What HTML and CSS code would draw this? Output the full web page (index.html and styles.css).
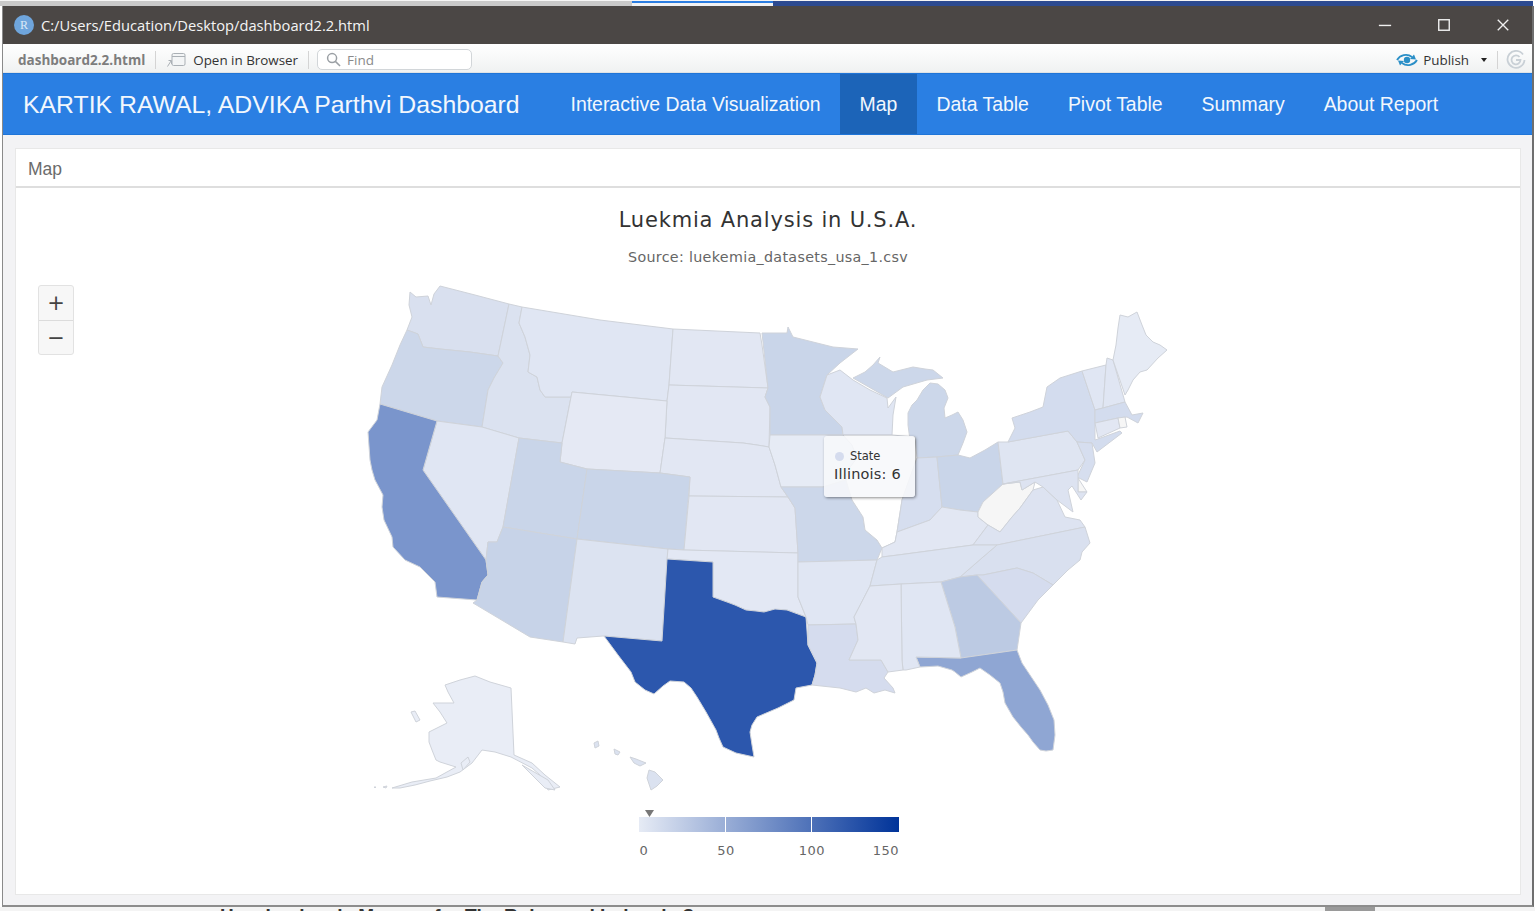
FILE: index.html
```html
<!DOCTYPE html>
<html lang="en">
<head>
<meta charset="utf-8">
<title>dashboard2.2.html</title>
<link rel="stylesheet" href="styles.css">
</head>
<body>
<div class="screen">
  <div class="tabstrip"><span class="seg-grey"></span><span class="seg-active"></span><span class="seg-dark"></span></div>
  <div class="window">
    <header class="titlebar">
      <span class="r-logo">R</span>
      <span class="path">C:/Users/Education/Desktop/dashboard2.2.html</span>
      <span class="winctl">
        <svg class="wc" viewBox="0 0 16 16"><path d="M1 8.500H15"/></svg>
        <svg class="wc" viewBox="0 0 16 16"><rect x="2" y="2" width="12" height="12"/></svg>
        <svg class="wc" viewBox="0 0 16 16"><path d="M2 2L14 14M14 2L2 14"/></svg>
      </span>
    </header>
    <div class="toolbar">
      <span class="fname">dashboard2.2.html</span>
      <span class="tsep"></span>
      <svg class="open-ic" viewBox="0 0 20 16"><rect x="6" y="1.500" width="13" height="12" rx="1.500"/><path d="M6 4.500H19"/><path class="arrow" d="M1.500 14.500L5 9M2.500 8.500H5.500V12"/></svg>
      <span class="tlabel">Open in Browser</span>
      <span class="tsep"></span>
      <span class="find">
        <svg class="find-ic" viewBox="0 0 16 16"><circle cx="6.500" cy="6.500" r="4.800"/><path d="M10 10L15 15"/></svg>
        <span>Find</span>
      </span>
      <span class="tright">
        <svg class="pub-ic" viewBox="0 0 22 16"><path d="M1 8C4 3 11 1 16 5"/><path d="M21 8C18 13 11 15 6 11"/><path class="pub-head" d="M14 7L20 7.500L18 2.500Z"/><path class="pub-head" d="M8 9L2 8.500L4 13.500Z"/><circle cx="11" cy="8" r="3.200"/></svg>
        <span class="tlabel">Publish</span>
        <span class="caret"></span>
        <span class="tsep"></span>
        <svg class="ref-ic" viewBox="0 0 20 20"><path d="M17 4.500A8.500 8.500 0 1 0 18.500 10"/><path d="M13.500 7A4.500 4.500 0 1 0 14.500 10H10"/></svg>
      </span>
    </div>
    <nav class="navbar">
      <a class="brand">KARTIK RAWAL, ADVIKA Parthvi Dashboard</a>
      <a class="navitem">Interactive Data Visualization</a>
      <a class="navitem active">Map</a>
      <a class="navitem">Data Table</a>
      <a class="navitem">Pivot Table</a>
      <a class="navitem">Summary</a>
      <a class="navitem">About Report</a>
    </nav>
    <main class="content">
      <section class="card">
        <div class="card-head">Map</div>
        <div class="chart">
          <h1 class="chart-title">Luekmia Analysis in U.S.A.</h1>
          <p class="chart-sub">Source: luekemia_datasets_usa_1.csv</p>
          <div class="zoomctl"><span class="zbtn">+</span><span class="zbtn">−</span></div>
          <svg class="map" viewBox="16 275 1504 619">
            <defs>
              <linearGradient id="legendGrad"><stop offset="0" stop-color="#e6ebf5"/><stop offset="1" stop-color="#003399"/></linearGradient>
            </defs>
            <g class="states">
              <polygon class="c-d9" points="410,292 416,297 428,296 431,305 434,294 440,286 475,295 509,304 498,356 470,352 440,349 423,347 418,334 407,330 412,317 409,305"/>
              <polygon class="c-ca" points="407,330 418,334 423,347 440,349 470,352 498,356 503,363 494,378 488,390 482,427 437,421 380,404 382,387 392,365 400,345"/>
              <polygon class="c-db" points="509,304 522,307 519,323 525,337 530,355 528,372 537,377 540,390 545,397 571,397 562,443 519,438 482,427 488,390 494,378 503,363 498,356"/>
              <polygon class="c-e0" points="522,307 600,320 673,329 669,385 667,401 572,392 571,397 545,397 540,390 537,377 528,372 530,355 525,337 519,323"/>
              <polygon class="c-e2" points="673,329 760,333 762,345 768,388 669,385"/>
              <polygon class="c-e2" points="669,385 768,388 765,397 770,407 769,447 757,445 743,443 665,438 667,401"/>
              <polygon class="c-e5" points="572,392 667,401 665,438 660,473 587,469 560,462 562,443"/>
              <polygon class="c-e2" points="665,438 743,443 757,445 769,447 775,465 781,487 788,497 689,496 690,477 660,473"/>
              <polygon class="c-e0" points="437,421 482,427 519,438 503,527 497,542 488,542 486,560 423,470"/>
              <polygon class="c-ca2" points="380,404 437,421 423,470 486,560 488,575 482,582 477,600 437,597 435,582 420,567 405,560 393,547 392,537 384,520 382,507 383,495 375,480 372,470 370,460 368,432 377,420"/>
              <polygon class="c-c9" points="519,438 562,443 560,462 587,469 577,539 503,527"/>
              <polygon class="c-c9" points="587,469 660,473 690,477 684,550 668,549 577,539"/>
              <polygon class="c-c7" points="503,527 577,539 563,642 530,637 473,603 477,600 482,582 488,575 486,560 488,542 497,542"/>
              <polygon class="c-dc" points="577,539 668,549 662,641 603,636 577,638 575,644 563,642"/>
              <polygon class="c-e2" points="689,496 788,497 795,508 798,553 684,550"/>
              <polygon class="c-e3" points="668,549 684,550 798,553 798,597 806,617 787,610 764,612 746,610 727,602 713,597 713,562 667,559"/>
              <polygon class="c-tx" points="667,559 713,562 713,597 727,602 735,605 746,610 756,611 764,612 775,609 787,610 806,617 808,645 817,663 815,675 812,685 796,688 794,700 778,708 757,717 752,725 750,732 752,745 754,757 736,753 723,747 719,738 716,730 706,712 697,697 691,688 684,682 670,681 663,686 654,694 645,690 635,682 631,672 618,655 604,636 662,641"/>
              <polygon class="c-c9" points="762,333 787,333 788,327 793,337 813,342 833,347 858,349 840,363 827,375 820,397 825,410 842,427 843,435 770,435 770,407 765,397 768,388"/>
              <polygon class="c-e6" points="770,435 843,435 852,445 857,458 848,470 846,480 823,487 781,487 775,465 769,447"/>
              <polygon class="c-ca" points="781,487 823,487 846,480 852,500 863,517 865,530 877,540 882,548 877,560 798,562 798,553 795,508 788,497"/>
              <polygon class="c-e0" points="798,562 877,560 870,586 854,617 856,624 808,625 806,617 798,597"/>
              <polygon class="c-d5" points="808,625 856,624 858,640 849,660 881,660 888,672 884,678 893,688 895,693 885,690 874,693 866,688 856,692 840,688 812,685 815,675 817,663 808,645"/>
              <polygon class="c-e0" points="827,375 840,370 853,380 870,390 887,398 888,408 896,397 893,415 892,435 843,435 842,427 825,410 820,397"/>
              <polygon class="c-ca" points="853,378 865,372 873,365 880,357 878,363 893,372 913,367 925,369 933,370 943,378 927,380 903,387 888,398"/>
              <polygon class="c-ca" points="930,383 938,384 945,390 948,398 944,408 945,418 952,415 958,412 963,420 967,432 963,443 958,455 937,457 917,458 910,440 908,425 908,413 912,405 917,400 923,390"/>
              <polygon class="c-ff" points="843,435 892,435 915,437 917,458 902,500 900,513 897,532 895,542 882,548 877,540 865,530 863,517 852,500 846,480 848,470 857,458 852,445"/>
              <polygon class="c-d6" points="917,458 937,457 942,507 930,520 897,532 900,513 902,500"/>
              <polygon class="c-c9" points="937,457 958,455 970,458 985,450 998,442 1003,484 983,502 978,512 960,510 942,507"/>
              <polygon class="c-e2" points="942,507 960,510 978,512 978,517 988,525 973,545 898,555 882,557 882,548 895,542 897,532 930,520"/>
              <polygon class="c-f5" points="1003,484 1020,482 1022,490 1035,482 1033,490 1020,508 1012,517 1000,532 988,525 978,517 978,512 983,502"/>
              <polygon class="c-dd" points="973,545 988,525 1000,532 1012,517 1020,508 1033,490 1043,487 1057,500 1065,517 1080,520 1085,527 997,545"/>
              <polygon class="c-df" points="998,442 1008,442 1068,431 1077,442 1085,460 1078,470 1003,484"/>
              <polygon class="c-d3" points="1008,442 1015,428 1012,418 1030,412 1043,407 1047,387 1060,378 1082,371 1095,410 1095,440 1120,431 1122,433 1097,452 1092,443 1077,442 1068,431"/>
              <polygon class="c-e0" points="1082,371 1106,365 1103,408 1095,410"/>
              <polygon class="c-e0" points="1107,358 1113,360 1125,402 1103,408 1106,365"/>
              <polygon class="c-e6" points="1113,360 1116,345 1118,328 1120,315 1128,317 1137,312 1142,325 1146,335 1153,342 1160,345 1167,350 1158,358 1147,370 1140,372 1133,380 1128,390 1125,395"/>
              <polygon class="c-d3" points="1095,410 1103,408 1125,402 1132,415 1143,413 1138,423 1127,417 1118,418 1095,423"/>
              <polygon class="c-e2" points="1095,423 1118,418 1120,428 1098,438"/>
              <polygon class="c-f5" points="1118,418 1125,417 1127,427 1120,428"/>
              <polygon class="c-d6" points="1077,442 1092,443 1095,463 1087,482 1077,477 1085,460"/>
              <polygon class="c-f5" points="1078,478 1087,492 1078,492"/>
              <polygon class="c-dd" points="1003,484 1078,470 1078,492 1087,492 1081,500 1072,486 1068,490 1073,512 1057,500 1043,487 1035,482 1022,490 1020,482"/>
              <polygon class="c-d9" points="997,545 1085,527 1090,543 1082,552 1080,560 1068,570 1053,585 1033,573 1017,568 983,575 977,575 960,577 983,557"/>
              <polygon class="c-dc" points="882,557 898,555 973,545 997,545 983,557 960,577 941,582 901,584 870,586 877,560"/>
              <polygon class="c-d5" points="977,575 983,575 1017,568 1033,573 1053,585 1038,600 1021,623"/>
              <polygon class="c-bc" points="941,582 960,577 977,575 1021,623 1017,650 961,658 955,627"/>
              <polygon class="c-fl" points="916,657 961,658 1017,650 1022,663 1030,675 1040,690 1048,705 1054,720 1055,735 1053,750 1046,751 1040,750 1033,742 1028,735 1021,727 1013,717 1005,703 1003,692 1000,683 990,675 980,668 972,672 961,677 955,672 952,670 938,666 920,667"/>
              <polygon class="c-e0" points="901,584 941,582 955,627 961,658 916,657 920,667 906,670 903,670 902,660"/>
              <polygon class="c-e2" points="870,586 901,584 902,660 903,670 888,672 881,660 849,660 858,640 856,624 854,617"/>
              <polygon class="c-e8" points="445,685 460,680 475,676 490,682 511,688 514,755 532,763 545,775 560,787 548,790 540,775 532,768 511,757 495,752 482,750 472,763 460,772 447,777 430,781 415,785 400,788 392,788 412,782 436,778 456,767 440,762 436,760 432,750 429,742 429,732 447,723 440,712 433,703 454,703 448,692"/>
              <polygon class="c-e8" points="411,712 415,711 420,720 416,722"/>
              <polygon class="c-e8" points="461,763 468,757 470,762 463,770"/>
              <polygon class="c-e8" points="522,765 548,780 555,790 545,788"/>
              <polygon class="c-e8" points="383,787 387,786 386,788"/>
              <polygon class="c-e8" points="374,787 376,787 375,788"/>
              <polygon class="c-db" points="649,770 655,772 663,780 657,786 651,790 647,778"/>
              <polygon class="c-db" points="594,743 598,741 599,746 595,748"/>
              <polygon class="c-db" points="614,749 620,752 618,755 615,754"/>
              <polygon class="c-db" points="630,757 636,759 646,763 640,766 634,763"/>
            </g>
            <rect class="legend-bar" x="639" y="817" width="260" height="15" fill="url(#legendGrad)"/>
            <path class="legend-sep" d="M725.500 817V832M811.500 817V832"/>
            <polygon class="legend-mark" points="645,810 654,810 649.500,817"/>
            <text class="legend-label" x="644" y="855" text-anchor="middle">0</text>
            <text class="legend-label" x="726" y="855" text-anchor="middle">50</text>
            <text class="legend-label" x="812" y="855" text-anchor="middle">100</text>
            <text class="legend-label" x="899" y="855" text-anchor="end">150</text>
          </svg>
          <div class="tooltip">
            <div class="tt-name"><span class="tt-dot"></span>State</div>
            <div class="tt-value">Illinois: 6</div>
          </div>
        </div>
      </section>
    </main>
  </div>
  <div class="underneath">
    <span class="under-text">How Leukemia Manage for The Rules and Lukemia ?</span>
    <span class="under-tab"></span>
  </div>
</div>
</body>
</html>
```
FILE: styles.css
```css
* { box-sizing: border-box; }
html, body { margin: 0; padding: 0; background: #fff; }
.screen { width: 1535px; height: 911px; overflow: hidden; display: flex; flex-direction: column; font-family: "Liberation Sans", Arial, sans-serif; }

.tabstrip { flex: 0 0 6px; display: flex; border-top: 1px solid #f5f5f5; margin-right: 2px; }
.seg-grey { width: 632px; background: #c9c9c9; }
.seg-active { width: 141px; background: #f2f2f2; border-top: 2px solid #2b7de0; }
.seg-dark { flex: 1; background: #2c4a90; }

.window { flex: 1; min-height: 0; display: flex; flex-direction: column; margin: 0 1px 0 2px; border-left: 1px solid #8a8a8a; border-right: 2px solid #6f6f6f; border-bottom: 2px solid #8d8d8d; }

.titlebar { flex: 0 0 38px; display: flex; align-items: center; background: #4b4745; color: #fff; padding-left: 11px; }
.r-logo { width: 20px; height: 20px; border-radius: 50%; background: #6fa5dc; color: #dbe9f7; font: 12px/20px "Liberation Serif", serif; text-align: center; }
.path { margin-left: 7px; font: 14.700px "Open Sans", sans-serif; color: #f4f4f4; white-space: nowrap; }
.winctl { margin-left: auto; display: flex; gap: 45px; margin-right: 22px; }
.wc { width: 14px; height: 14px; fill: none; stroke: #f0f0f0; stroke-width: 1.600; }

.toolbar { flex: 0 0 29px; display: flex; align-items: center; padding: 3px 0 0 15px; background: linear-gradient(#ffffff, #f0f2f2); color: #222; border-bottom: 1px solid #dfe3e6; }
.fname { font: bold 13.500px "Open Sans", sans-serif; color: #7d7d7d; }
.tsep { width: 1px; height: 18px; background: #d4d4d4; margin: 0 10px; }
.open-ic { width: 20px; height: 16px; fill: #f3f5f6; stroke: #aab0b5; stroke-width: 1; margin-right: 7px; }
.open-ic .arrow { fill: none; }
.tlabel { font: 13.400px "Open Sans", sans-serif; color: #333; white-space: nowrap; }
.find { width: 155px; height: 21px; margin-left: -2px; border: 1px solid #d2d6d9; border-radius: 5px; background: #fff; display: flex; align-items: center; padding-left: 8px; gap: 6px; font: 13.500px "Open Sans", sans-serif; color: #8a8a8a; }
.find-ic { width: 15px; height: 15px; fill: none; stroke: #9a9fa4; stroke-width: 1.600; }
.tright { margin-left: auto; display: flex; align-items: center; margin-right: 6px; }
.pub-ic { width: 22px; height: 16px; margin-right: 5px; fill: none; stroke: #2a8fc7; stroke-width: 1.800; }
.pub-ic circle, .pub-ic .pub-head { fill: #2a8fc7; stroke: none; }
.caret { width: 0; height: 0; border: 3.500px solid transparent; border-top: 4px solid #222; border-bottom: 0; margin-left: 12px; }
.tright .tsep { margin: 0 8px 0 10px; }
.ref-ic { width: 20px; height: 20px; fill: none; stroke: #c9d0d6; stroke-width: 1.800; }

.navbar { flex: 0 0 62px; display: flex; align-items: stretch; background: #2a7fe3; color: #fff; border-top: 1px solid #1f75d8; border-bottom: 1px solid #1f75d8; }
.brand { font-size: 24.800px; line-height: 61px; height: 60px; padding-left: 20px; width: 548px; white-space: nowrap; color: #f2f7fd; }
.navitem { font-size: 19.430px; line-height: 61px; height: 60px; padding: 0 19.500px; white-space: nowrap; color: #f2f7fd; }
.navitem.active { background: #1c64b8; }

.content { flex: 1; min-height: 0; background: #f3f3f5; padding: 13px 11px 10px 12px; display: flex; }
.card { flex: 1; display: flex; flex-direction: column; background: #fff; border: 1px solid #e8e8e8; }
.card-head { flex: 0 0 39px; padding: 3px 0 0 12px; font-size: 17.500px; line-height: 34px; color: #6b6b6b; border-bottom: 2px solid #dedede; }

.chart { flex: 1; min-height: 0; position: relative; display: flex; flex-direction: column; align-items: center; }
.chart-title { margin: 18px 0 0; font: 400 21px/28px "DejaVu Sans", sans-serif; letter-spacing: 0.820px; color: #333; }
.chart-sub { margin: 14px 0 0; font: 400 14.300px/18px "DejaVu Sans", sans-serif; letter-spacing: 0.310px; color: #666; }
.map { display: block; width: 1504px; height: 619px; margin-top: 9px; flex: none; }

.states polygon { stroke: #cfd3da; stroke-width: 1; stroke-linejoin: round; }
.c-d9 { fill: #d9e0ef; } .c-ca { fill: #ccd7ea; } .c-ca2 { fill: #7a95cc; } .c-db { fill: #dbe2f0; }
.c-e0 { fill: #e0e6f3; } .c-e2 { fill: #e2e7f3; } .c-e3 { fill: #e3e8f4; } .c-e5 { fill: #e5e9f4; }
.c-e6 { fill: #e6ebf5; } .c-e8 { fill: #e9edf6; } .c-c9 { fill: #c9d5e9; } .c-c7 { fill: #c7d3e8; }
.c-dc { fill: #dce3f1; } .c-dd { fill: #dde3f1; } .c-df { fill: #dfe5f2; } .c-d3 { fill: #d3dcee; }
.c-d5 { fill: #d5dcee; } .c-d6 { fill: #d6deef; } .c-bc { fill: #bccae3; } .c-fl { fill: #8fa6d3; }
.c-tx { fill: #2c57ad; } .c-ff { fill: #ffffff; } .c-f5 { fill: #f6f6f6; }
.legend-sep { stroke: #fff; stroke-width: 1; fill: none; }
.legend-mark { fill: #777; }
.legend-label { font: 13px "DejaVu Sans", sans-serif; letter-spacing: 0.500px; fill: #666; }

.zoomctl { position: absolute; left: 22px; top: 97px; width: 36px; border: 1px solid #e2e2e2; border-radius: 3px; background: #f7f7f7; display: flex; flex-direction: column; }
.zbtn { height: 34px; font: 21px/35px "DejaVu Sans", sans-serif; text-align: center; color: #444; }
.zbtn + .zbtn { border-top: 1px solid #dcdcdc; }

.tooltip { position: absolute; left: 808px; top: 248px; width: 91px; height: 61px; padding: 13px 0 0 10px; background: rgba(247,248,250,.88); border-radius: 3px; box-shadow: 1px 1px 3px rgba(0,0,0,.45); color: #333; }
.tt-name { font: 11.500px/14px "DejaVu Sans", sans-serif; padding-left: 16px; position: relative; }
.tt-dot { position: absolute; left: 1px; top: 3px; width: 9px; height: 9px; border-radius: 50%; background: #d5dcee; }
.tt-value { margin-top: 1px; font: 14.500px/20px "DejaVu Sans", sans-serif; letter-spacing: 0.200px; white-space: nowrap; }

.underneath { flex: 0 0 4px; position: relative; overflow: hidden; background: #f4f4f4; }
.under-text { position: absolute; left: 220px; top: -1px; font: bold 19px/20px "Liberation Sans", sans-serif; color: #333; white-space: nowrap; }
.under-tab { position: absolute; left: 1325px; top: 0; width: 50px; height: 4px; background: #9a9a9a; }
```
